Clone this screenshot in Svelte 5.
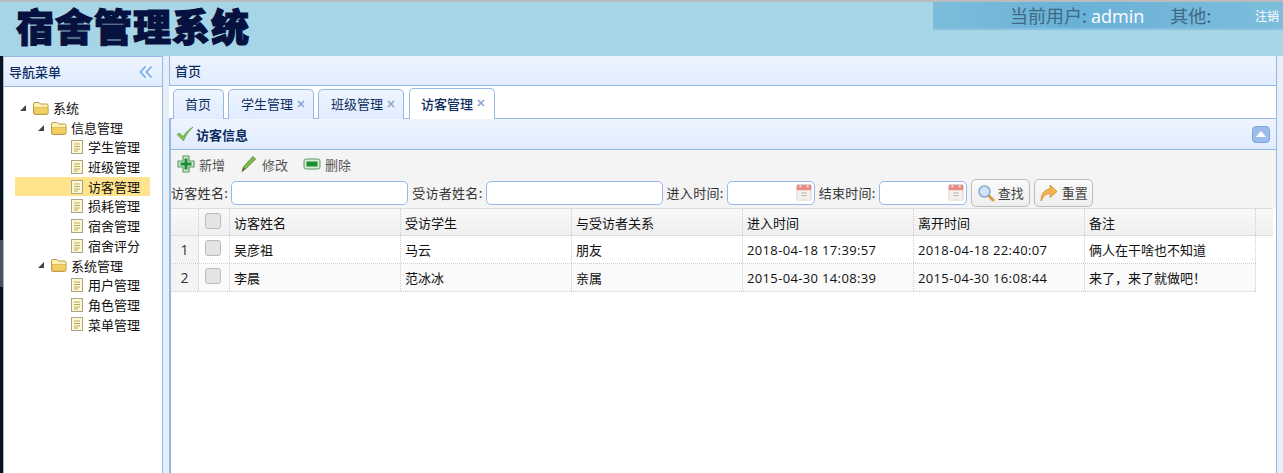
<script>
	const tree = [
		{ label: '系统', level: 0, type: 'folder' },
		{ label: '信息管理', level: 1, type: 'folder' },
		{ label: '学生管理', level: 2, type: 'file' },
		{ label: '班级管理', level: 2, type: 'file' },
		{ label: '访客管理', level: 2, type: 'file', selected: true },
		{ label: '损耗管理', level: 2, type: 'file' },
		{ label: '宿舍管理', level: 2, type: 'file' },
		{ label: '宿舍评分', level: 2, type: 'file' },
		{ label: '系统管理', level: 1, type: 'folder' },
		{ label: '用户管理', level: 2, type: 'file' },
		{ label: '角色管理', level: 2, type: 'file' },
		{ label: '菜单管理', level: 2, type: 'file' }
	];

	const tabs = [
		{ label: '首页' },
		{ label: '学生管理', close: true },
		{ label: '班级管理', close: true },
		{ label: '访客管理', close: true, active: true }
	];

	const columns = ['访客姓名', '受访学生', '与受访者关系', '进入时间', '离开时间', '备注'];

	const rows = [
		['吴彦祖', '马云', '朋友', '2018-04-18 17:39:57', '2018-04-18 22:40:07', '俩人在干啥也不知道'],
		['李晨', '范冰冰', '亲属', '2015-04-30 14:08:39', '2015-04-30 16:08:44', '来了，来了就做吧！']
	];

	const isTime = (value) => /^\d{4}-/.test(value);
</script>

<div class="page">
	<header class="top">
		<div class="logo">宿舍管理系统</div>
		<div class="userbar">
			<span class="who">当前用户: <b>admin</b></span>
			<span class="other">其他:</span>
			<span class="logout">注销</span>
		</div>
	</header>

	<div class="main">
		<div class="strip"></div>
		<aside class="west">
			<div class="panel-title">
				<span>导航菜单</span>
				<svg class="collapse" width="14" height="14" viewBox="0 0 14 14" fill="none" stroke="#6ea9e4" stroke-width="1.6">
					<path d="M6.5 1.5 1.5 7l5 5.5M12.5 1.5 7.5 7l5 5.5" />
				</svg>
			</div>
			<ul class="tree">
				{#each tree as node}
					<li class="node lv{node.level}" class:selected={node.selected}>
						{#if node.type === 'folder'}
							<svg class="arrow" width="8" height="8" viewBox="0 0 8 8"><path d="M7 1v6H1z" fill="#444" /></svg>
							<svg class="ico" width="18" height="16" viewBox="0 0 18 16">
								<path d="M1.5 13V4q0-1.500 1.500-1.500h4l1.500 1.500h6q1.500 0 1.500 1.500V13q0 1.500-1.500 1.500H3Q1.500 14.500 1.500 13z" fill="#fdf0b0" stroke="#b89b4a" />
								<path d="M2 7.500h14V13q0 1-1 1H3q-1 0-1-1z" fill="#f3cf62" stroke="#c9a84f" stroke-width=".6" />
							</svg>
						{:else}
							<svg class="ico file" width="14" height="16" viewBox="0 0 14 16">
								<rect x="1.500" y="1.500" width="11" height="13" fill="#fdf8cf" stroke="#aaa48a" />
								<path d="M4 5h6M4 7.500h6M4 10h6M4 12h4" stroke="#b5a96a" />
							</svg>
						{/if}
						<span>{node.label}</span>
					</li>
				{/each}
			</ul>
		</aside>

		<div class="gap"></div>

		<section class="center">
			<div class="panel-title center-title"><span>首页</span></div>
			<div class="tabs">
				{#each tabs as tab}
					<div class="tab" class:active={tab.active} class:closable={tab.close}>
						<span>{tab.label}</span>
						{#if tab.close}
							<svg class="x" width="8" height="8" viewBox="0 0 8 8" stroke="#8ea6cb" stroke-width="1.700"><path d="M1 1l6 6M7 1 1 7" /></svg>
						{/if}
					</div>
				{/each}
			</div>

			<div class="inner">
				<div class="inner-title">
					<svg width="18" height="16" viewBox="0 0 18 16"><path d="M1 8.500 3.500 7 7 10.500C9.500 6.500 12.500 3.500 17 1 13 5 10 9 7.500 15z" fill="#7cc04f" stroke="#5d9a3a" stroke-width=".6" /></svg>
					<span>访客信息</span>
					<span class="tool">
						<svg width="10" height="6" viewBox="0 0 10 6"><path d="M5 0l5 6H0z" fill="#fff" /></svg>
					</span>
				</div>

				<div class="toolbar">
					<div class="actions">
						<span class="act">
							<svg width="18" height="18" viewBox="0 0 18 18"><path d="M6 1h6v5h5v6h-5v5H6v-5H1V6h5z" fill="#cfe8d0" stroke="#5f9a6b" stroke-width="1.200" stroke-linejoin="round" /><path d="M7.500 3.500h3v4h4v3h-4v4h-3v-4h-4v-3h4z" fill="#1f8f35" /></svg>
							新增
						</span>
						<span class="act">
							<svg width="18" height="18" viewBox="0 0 18 18"><path d="M2 16.500 3.500 12 13 1.500l2.500 2.500L5.500 14z" fill="#7fbf4a" stroke="#4f8c33" /><path d="M2 16.500 3.500 12l2 2z" fill="#666" /></svg>
							修改
						</span>
						<span class="act">
							<svg width="18" height="12" viewBox="0 0 18 12"><rect x="1" y="1" width="16" height="10" rx="2" fill="#d6ecd6" stroke="#5f9a6b" /><rect x="3.500" y="3.500" width="11" height="5" fill="#1a8f30" /></svg>
							删除
						</span>
					</div>
					<div class="search">
						<label>访客姓名:</label><input class="name" />
						<label>受访者姓名:</label><input class="name" />
						<label>进入时间:</label>
						<div class="date"><input /><svg width="18" height="18" viewBox="0 0 18 20"><rect x="1" y="2" width="16" height="17" rx="1" fill="#f4f2ee" stroke="#d8d4cc" /><rect x="1" y="2" width="16" height="6" fill="#ea8a80" /><rect x="4" y="1" width="2" height="4" fill="#ddd" /><rect x="12" y="1" width="2" height="4" fill="#ddd" /><path d="M6 11h6M6 14h6" stroke="#c4c0b8" stroke-width="1.500" /></svg></div>
						<label>结束时间:</label>
						<div class="date"><input /><svg width="18" height="18" viewBox="0 0 18 20"><rect x="1" y="2" width="16" height="17" rx="1" fill="#f4f2ee" stroke="#d8d4cc" /><rect x="1" y="2" width="16" height="6" fill="#ea8a80" /><rect x="4" y="1" width="2" height="4" fill="#ddd" /><rect x="12" y="1" width="2" height="4" fill="#ddd" /><path d="M6 11h6M6 14h6" stroke="#c4c0b8" stroke-width="1.500" /></svg></div>
						<button class="btn">
							<svg width="18" height="18" viewBox="0 0 18 18"><path d="M11 11l5 5" stroke="#d99a3c" stroke-width="3" stroke-linecap="round" /><circle cx="7.500" cy="7.500" r="5.500" fill="#cfe4f7" stroke="#8aa9c6" stroke-width="1.500" /></svg>
							查找
						</button>
						<button class="btn">
							<svg width="20" height="20" viewBox="0 0 20 20"><path d="M2 18C2 10 6 6.500 11 6V2l7 6.500-7 6V10.500C7 10.500 4.500 13 2 18z" fill="#f5b54a" stroke="#c98a2e" stroke-width=".8" stroke-linejoin="round" /></svg>
							重置
						</button>
					</div>
				</div>

				<div class="grid">
					<div class="row head">
						<div class="num"></div>
						<div class="ck"><span class="box"></span></div>
						{#each columns as col}
							<div class="cell">{col}</div>
						{/each}
					</div>
					{#each rows as row, i}
						<div class="row body">
							<div class="num">{i + 1}</div>
							<div class="ck"><span class="box"></span></div>
							{#each row as value}
								<div class="cell" class:time={isTime(value)}>{value}</div>
							{/each}
						</div>
					{/each}
				</div>
			</div>
		</section>
		<div class="edge"></div>
	</div>
</div>

<style>
	:global(body) {
		margin: 0;
		background: #fff;
	}

	.page {
		width: 1283px;
		height: 473px;
		overflow: hidden;
		font-family: "Noto Sans CJK SC", "Open Sans", sans-serif;
		font-size: 13px;
		color: #111;
		display: flex;
		flex-direction: column;
	}

	.top {
		height: 54px;
		border-top: 2px solid #b9bcbe;
		background: #a6d5e8;
		display: flex;
		justify-content: space-between;
		align-items: flex-start;
		flex: none;
	}

	.logo {
		margin: 2px 0 0 16px;
		font-size: 38px;
		line-height: 42px;
		letter-spacing: 1px;
		font-weight: 900;
		color: #061140;
		-webkit-text-stroke: 1.200px #061140;
	}

	.userbar {
		width: 350px;
		height: 28px;
		border-bottom: 2px solid #86c0dd;
		background: linear-gradient(90deg, #7dbddb, #69b1d7 40%, #7dbddb);
		display: flex;
		align-items: center;
		color: #3d6a82;
		font-size: 18px;
		padding-left: 77px;
		box-sizing: border-box;
	}

	.who b {
		color: #fff;
		font-weight: 400;
		font-family: "Open Sans", sans-serif;
	}

	.other {
		margin-left: 26px;
	}

	.logout {
		margin-left: auto;
		margin-right: 1px;
		color: #fff;
		font-size: 12px;
		width: 27px;
	}

	.main {
		flex: 1;
		display: flex;
		min-height: 0;
	}

	.strip {
		width: 3px;
		background: linear-gradient(#0d1418 184px, #4a5056 184px, #4a5056 231px, #0d1418 231px);
		flex: none;
	}

	.west {
		width: 160px;
		flex: none;
		border: 1px solid #95b8e7;
		border-bottom: none;
		box-sizing: border-box;
		background: #fff;
	}

	.panel-title {
		height: 30px;
		box-sizing: border-box;
		background: linear-gradient(#eff5ff, #e0ecff);
		border-bottom: 1px solid #95b8e7;
		display: flex;
		align-items: center;
		justify-content: space-between;
		padding: 0 8px 0 5px;
		font-size: 13px;
		font-weight: 500;
		color: #0e2d5f;
	}

	.collapse {
		margin-right: 1px;
	}

	.tree {
		list-style: none;
		margin: 11px 0 0;
		padding: 0 0 0 11px;
	}

	.node {
		height: 19.700px;
		line-height: 19.700px;
		display: flex;
		align-items: center;
		width: 135px;
		box-sizing: border-box;
		white-space: nowrap;
	}

	.node.selected {
		background: #ffe48d;
	}

	.lv0 { padding-left: 4px; }
	.lv1 { padding-left: 22px; }
	.lv2 { padding-left: 55px; }

	.arrow {
		margin-right: 5px;
		flex: none;
	}

	.ico {
		margin-right: 3px;
		flex: none;
	}

	.ico.file {
		margin-right: 4px;
	}

	.gap {
		width: 6px;
		flex: none;
		background: #e6eef8;
	}

	.center {
		width: 1108px;
		flex: none;
		border-left: 1px solid #95b8e7;
		border-right: 1px solid #95b8e7;
		box-sizing: border-box;
		display: flex;
		flex-direction: column;
		background: #fff;
	}

	.center-title {
		flex: none;
	}

	.tabs {
		flex: none;
		height: 33px;
		box-sizing: border-box;
		display: flex;
		align-items: flex-end;
		gap: 4px;
		padding-left: 4px;
		margin-left: -1px;
		border-bottom: 1px solid #95b8e7;
		background: #fff;
		position: relative;
	}

	.tab {
		height: 30px;
		box-sizing: border-box;
		padding: 0 12px 2px 11px;
		border: 1px solid #95b8e7;
		border-bottom: none;
		border-radius: 5px 5px 0 0;
		background: linear-gradient(#eff5ff, #e0ecff);
		display: flex;
		align-items: center;
		color: #0e2d5f;
		margin-bottom: -1px;
	}

	.tab.closable {
		width: 86px;
		padding: 0 0 2px 12px;
		gap: 4px;
	}

	.tab.active {
		background: #fff;
		color: #0e2d5f;
		font-weight: 500;
		height: 31px;
		margin-left: 1px;
		padding-left: 11px;
	}

	.x {
		flex: none;
	}

	.inner {
		flex: 1;
		margin-left: -1px;
		border-left: 2px solid #95b8e7;
		min-height: 0;
		display: flex;
		flex-direction: column;
		background: #fff;
	}

	.inner-title {
		flex: none;
		height: 31px;
		box-sizing: border-box;
		border-bottom: 1px solid #95b8e7;
		background: linear-gradient(#eff5ff, #e0ecff);
		display: flex;
		align-items: center;
		padding: 0 6px 0 5px;
		font-size: 13px;
		font-weight: 700;
		color: #0e2d5f;
		gap: 2px;
	}

	.tool {
		margin-left: auto;
		width: 18px;
		height: 17px;
		box-sizing: border-box;
		border: 1px solid #7fa7dc;
		border-radius: 4px;
		background: #9cbdec;
		display: flex;
		align-items: center;
		justify-content: center;
	}

	.toolbar {
		flex: none;
		height: 58px;
		background: #f4f4f4;
		box-sizing: border-box;
		color: #444;
	}

	.actions {
		height: 28px;
		display: flex;
		align-items: center;
		padding-left: 6px;
		gap: 15px;
		color: #555;
	}

	.act {
		display: inline-flex;
		align-items: center;
		gap: 4px;
	}

	.search {
		height: 29px;
		display: flex;
		align-items: center;
		color: #333;
		white-space: nowrap;
	}

	.search label {
		margin-right: 3px;
		letter-spacing: .3px;
	}

	.search input {
		box-sizing: border-box;
		height: 24px;
		border: 1px solid #95b8e7;
		border-radius: 5px;
		background: #fff;
		outline: none;
		padding: 0;
	}

	.name {
		width: 177px;
		margin-right: 4px;
	}

	.date {
		position: relative;
		width: 88px;
		height: 24px;
		margin-right: 4px;
	}

	.date input {
		width: 100%;
	}

	.date svg {
		position: absolute;
		right: 2px;
		top: 2px;
	}

	.btn {
		height: 28px;
		width: 59px;
		margin-right: 4px;
		padding: 0;
		box-sizing: border-box;
		border: 1px solid #bbb;
		border-radius: 5px;
		background: linear-gradient(#fafafa, #eee);
		font: inherit;
		color: #444;
		display: flex;
		align-items: center;
		justify-content: center;
		gap: 3px;
	}

	.grid {
		flex: 1;
		background: #fff;
	}

	.row {
		display: flex;
		width: 1085px;
		box-sizing: border-box;
	}

	.row.head {
		width: 1102px;
		height: 28px;
		border-top: 1px solid #ddd;
		border-bottom: 1px solid #ddd;
		background: linear-gradient(#f9f9f9, #efefef);
	}

	.row.body {
		height: 28px;
		border-bottom: 1px dotted #ccc;
	}

	.row.body:nth-child(odd) {
		background: #fafafa;
	}

	.num {
		width: 28px;
		flex: none;
		box-sizing: border-box;
		border-right: 1px dotted #ccc;
		display: flex;
		align-items: center;
		justify-content: center;
		background: #f4f4f4;
		font-family: "Open Sans", sans-serif;
		font-size: 14px;
		color: #333;
	}

	.head .num {
		background: none;
	}

	.ck {
		width: 31px;
		flex: none;
		box-sizing: border-box;
		border-right: 1px dotted #ccc;
		display: flex;
		align-items: center;
		justify-content: center;
		padding: 0 2px 3px 0;
	}

	.box {
		width: 14px;
		height: 14px;
		border: 1px solid #bbb;
		border-radius: 3px;
		background: #e4e4e4;
	}

	.cell {
		width: 171px;
		flex: none;
		box-sizing: border-box;
		border-right: 1px dotted #ccc;
		padding-left: 4px;
		display: flex;
		align-items: center;
		color: #111;
	}

	.cell.time {
		font-family: "Open Sans", sans-serif;
		letter-spacing: .35px;
	}

	.edge {
		flex: 1;
		background: #e6eef8;
	}
</style>
